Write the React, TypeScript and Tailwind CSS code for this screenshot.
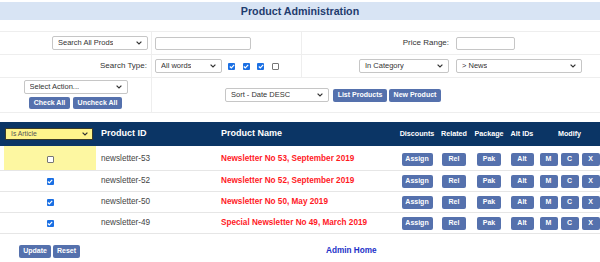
import React from 'react';

interface Row {
  id: string;
  name: string;
  checked: boolean;
  highlight?: boolean;
}

const rows: Row[] = [
  { id: 'newsletter-53', name: 'Newsletter No 53, September 2019', checked: false, highlight: true },
  { id: 'newsletter-52', name: 'Newsletter No 52, September 2019', checked: true },
  { id: 'newsletter-50', name: 'Newsletter No 50, May 2019', checked: true },
  { id: 'newsletter-49', name: 'Special Newsletter No 49, March 2019', checked: true },
];

const Chevron = () => (
  <svg width="6" height="4" viewBox="0 0 6 4" className="shrink-0">
    <path d="M0.6 0.6 L3 3 L5.4 0.6" fill="none" stroke="#333" strokeWidth="1.2" />
  </svg>
);

function Sel({ label, className = '' }: { label: string; className?: string }) {
  return (
    <div className={`flex items-center justify-between rounded-[2px] border border-[#c6c6c6] bg-white pl-[5px] pr-[5px] text-[7.5px] text-[#333] ${className}`}>
      <span className="truncate">{label}</span>
      <Chevron />
    </div>
  );
}

function Btn({ label, className = '' }: { label: string; className?: string }) {
  return (
    <span className={`flex items-center justify-center rounded-[2px] bg-[#5571ad] text-[7px] font-bold text-white ${className}`}>
      {label}
    </span>
  );
}

function Check({ on }: { on: boolean }) {
  return on ? (
    <span className="flex h-[7px] w-[7px] items-center justify-center rounded-[1px] bg-[#1a6fe3]">
      <svg width="6" height="5" viewBox="0 0 6 5">
        <path d="M0.8 2.5 L2.3 3.9 L5.2 0.9" fill="none" stroke="white" strokeWidth="1.2" />
      </svg>
    </span>
  ) : (
    <span className="h-[7px] w-[7px] rounded-[1px] border border-[#767676] bg-white" />
  );
}

export default function App() {
  return (
    <div className="h-[262px] w-[600px] overflow-hidden bg-white font-['Liberation_Sans',Arial,sans-serif]">
      <div className="mt-[2px] flex h-[18px] items-center justify-center bg-[#d8e4f4] text-[10.7px] font-bold text-[#1f3c6e]">
        Product Administration
      </div>

      {/* search form */}
      <div className="mt-[11px] border-t border-[#eeeeee]">
        <div className="flex h-[23px] border-b border-[#eeeeee]">
          <div className="flex w-[152px] items-center justify-end border-r border-[#eeeeee] pr-[3px]">
            <Sel label="Search All Prods" className="h-[14px] w-[96px]" />
          </div>
          <div className="flex w-[150px] items-center border-r border-[#eeeeee] pl-[3px]">
            <span className="h-[13px] w-[96px] rounded-[2px] border border-[#c6c6c6] bg-white" />
          </div>
          <div className="flex w-[150px] items-center justify-end pr-[3px] text-[8px] text-[#333]">
            Price Range:
          </div>
          <div className="flex items-center pl-[4px]">
            <span className="h-[13px] w-[59px] rounded-[2px] border border-[#c6c6c6] bg-white" />
          </div>
        </div>

        <div className="flex h-[23px] border-b border-[#eeeeee]">
          <div className="flex w-[152px] items-center justify-end border-r border-[#eeeeee] pr-[4px] text-[8px] text-[#333]">
            Search Type:
          </div>
          <div className="flex w-[150px] items-center border-r border-[#eeeeee] pl-[3px]">
            <Sel label="All words" className="h-[14px] w-[67px]" />
            <div className="ml-[6px] flex gap-[7.5px]">
              <Check on />
              <Check on />
              <Check on />
              <Check on={false} />
            </div>
          </div>
          <div className="flex w-[150px] items-center justify-end pr-[3px]">
            <Sel label="In Category" className="h-[14px] w-[90px]" />
          </div>
          <div className="flex items-center pl-[4px]">
            <Sel label="> News" className="h-[14px] w-[126px]" />
          </div>
        </div>

        <div className="flex h-[35px] border-b border-[#eeeeee]">
          <div className="flex w-[152px] flex-col items-center border-r border-[#eeeeee] pt-[2px]">
            <Sel label="Select Action..." className="h-[14px] w-[104px]" />
            <div className="mt-[3px] flex gap-[3px]">
              <Btn label="Check All" className="h-[12px] w-[41px]" />
              <Btn label="Uncheck All" className="h-[12px] w-[49px]" />
            </div>
          </div>
          <div className="flex items-center pl-[73px]">
            <Sel label="Sort - Date DESC" className="h-[14px] w-[104px]" />
            <Btn label="List Products" className="ml-[4px] h-[13px] w-[54px]" />
            <Btn label="New Product" className="ml-[2px] h-[13px] w-[52px]" />
          </div>
        </div>
      </div>

      {/* product list */}
      <div className="mt-[9px]">
        <div className="flex h-[24px] items-center bg-[#0b3565] font-bold text-white">
          <div className="ml-[4px] w-[92px] pl-[1px]">
            <div className="flex h-[12px] w-[88px] items-center justify-between border border-[#3b3b2a] bg-[#fff48c] pl-[5px] pr-[4px] text-[6.8px] font-normal text-[#555]">
              <span>Is Article</span>
              <Chevron />
            </div>
          </div>
          <div className="w-[120px] pl-[5px] text-[9px]">Product ID</div>
          <div className="w-[183px] pl-[5px] text-[9px]">Product Name</div>
          <div className="w-[36px] whitespace-nowrap text-center text-[7.2px]">Discounts</div>
          <div className="w-[38px] text-center text-[7.2px]">Related</div>
          <div className="w-[32px] text-center text-[7.2px]">Package</div>
          <div className="w-[34px] whitespace-nowrap text-center text-[7.2px]">Alt IDs</div>
          <div className="w-[61px] text-center text-[7.2px]">Modify</div>
        </div>

        {rows.map((r, i) => (
          <div
            key={r.id}
            className={`flex border-b border-[#e6e6e6] ${i === 0 ? 'h-[25px]' : 'h-[21px]'}`}
          >
            <div className={`ml-[4px] flex w-[92px] items-center justify-center ${r.highlight ? 'bg-[#fdf7a1] pt-[3px]' : ''}`}>
              <Check on={r.checked} />
            </div>
            <div className={`flex items-center ${i === 0 ? 'pt-[3px]' : ''}`}>
              <div className="w-[120px] pl-[5px] text-[8.2px] text-[#444]">{r.id}</div>
              <div className="w-[183px] pl-[5px] text-[8.2px] font-bold text-[#ff1a1f]">{r.name}</div>
              <div className="flex w-[36px] justify-center">
                <Btn label="Assign" className="h-[13px] w-[31px]" />
              </div>
              <div className="flex w-[38px] justify-center">
                <Btn label="Rel" className="h-[13px] w-[24px]" />
              </div>
              <div className="flex w-[32px] justify-center">
                <Btn label="Pak" className="h-[13px] w-[24px]" />
              </div>
              <div className="flex w-[34px] justify-center">
                <Btn label="Alt" className="h-[13px] w-[23px]" />
              </div>
              <div className="flex w-[61px] justify-center gap-[3px]">
                <Btn label="M" className="h-[13px] w-[18px]" />
                <Btn label="C" className="h-[13px] w-[18px]" />
                <Btn label="X" className="h-[13px] w-[18px]" />
              </div>
            </div>
          </div>
        ))}
      </div>

      <div className="mt-[11px] flex h-[13px] items-center">
        <Btn label="Update" className="ml-[19px] h-[13px] w-[32px]" />
        <Btn label="Reset" className="ml-[2px] h-[13px] w-[27px]" />
        <span className="ml-[246px] text-[8.2px] font-bold text-[#2230c8]">Admin Home</span>
      </div>
    </div>
  );
}
